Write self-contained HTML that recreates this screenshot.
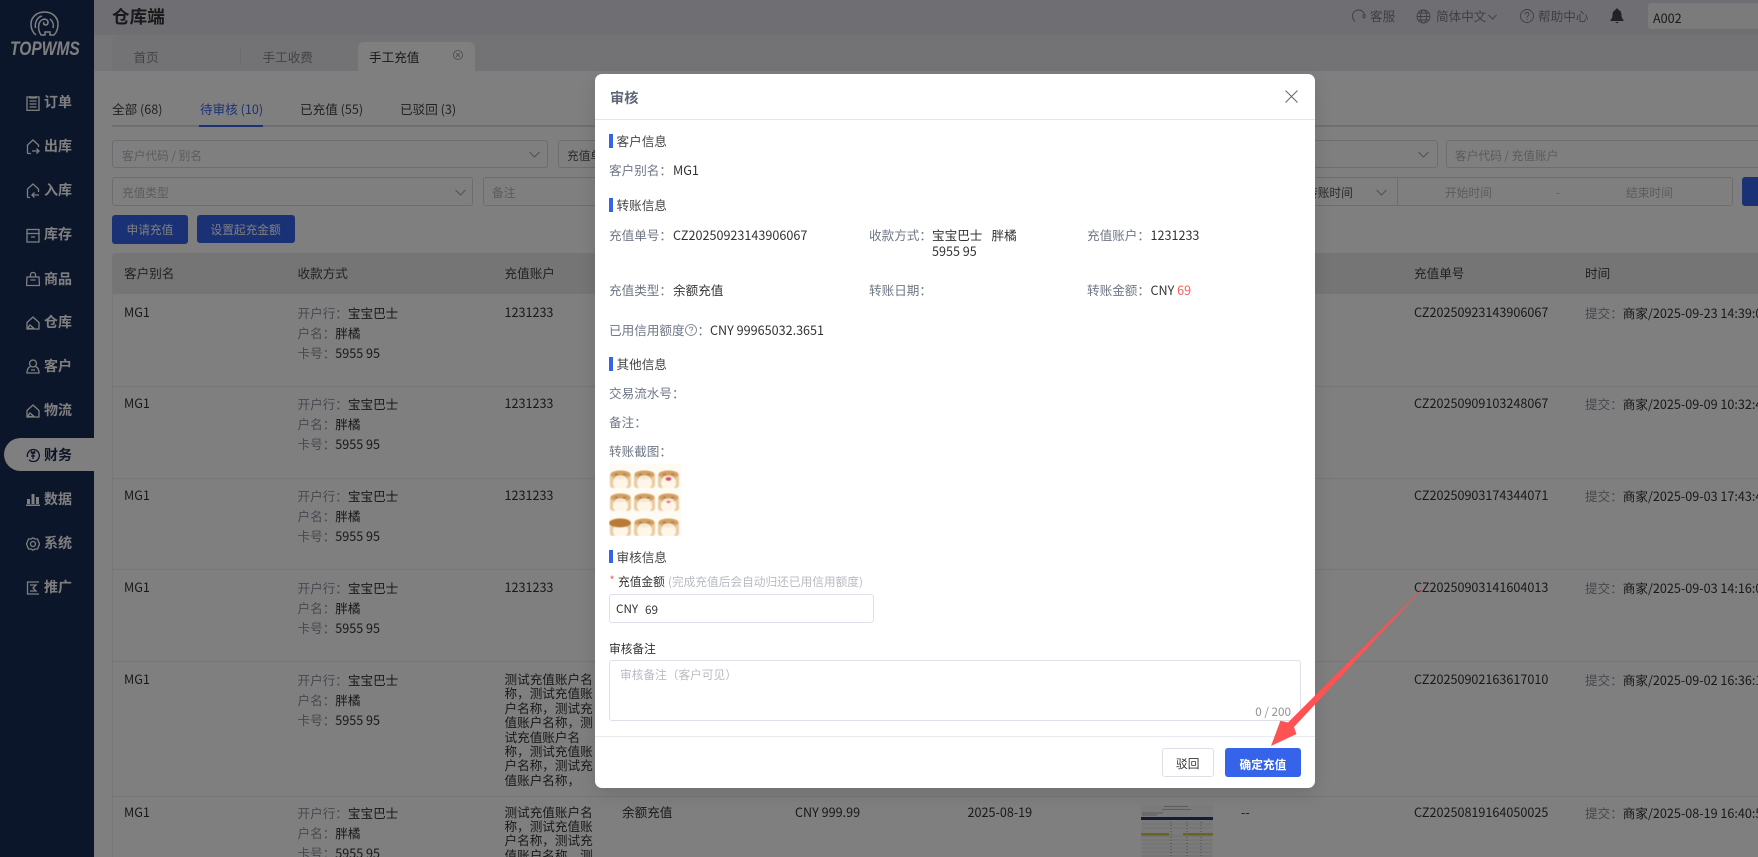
<!DOCTYPE html>
<html lang="zh-CN"><head><meta charset="utf-8"><title>TOPWMS</title>
<style>
html,body{margin:0;padding:0;width:1758px;height:857px;overflow:hidden;background:#fff}
body{position:relative;font-family:"Noto Sans CJK SC","Liberation Sans",sans-serif;font-size:12.6px;color:#333}
.t{position:absolute;white-space:nowrap;line-height:20px;margin-top:-10px}
.b{position:absolute;box-sizing:border-box}
.l{color:#8d929c}
.ph{color:#b4b7be;font-size:11.7px}
.f{position:absolute;box-sizing:border-box;border:1px solid #d8dbe2;border-radius:3px;background:#fff}
.ic{position:absolute;left:26px;fill:none;stroke:#fff;stroke-width:1.3}
.menu{position:absolute;left:44px;font-size:14px;font-weight:700;color:#fff;white-space:nowrap;line-height:20px;margin-top:-11px}
.r{position:absolute;left:112px;right:0;height:1px;background:#ebedf2}
.s{position:absolute;left:609px;width:4px;background:#3563ea}
.ml{color:#6f7786}
.ch{position:absolute;fill:none;stroke:#9ea3ad;stroke-width:1}
</style></head><body>

<!-- sidebar -->
<div class="b" style="left:0;top:0;width:94px;height:857px;background:#182c56"></div>
<svg style="position:absolute;left:30px;top:11px" width="30" height="26" viewBox="0 0 30 26" fill="none" stroke="#fff" stroke-width="1.500"><path d="M6 24C2 21 1 17 1 13 1 6 7 1 14.500 1S28 6 28 13C28 17 27 21 24 24H20V21H15V24H11C9 21 8 17 9 13 10 9 14 7 17 9 19 11 18 14 15.500 14 13.500 14 13 12 14.500 11.500"/><path d="M20 8C23 10.500 24 14 23 17"/><path d="M5.500 17C4.500 11 7.500 6 12 5"/></svg>
<div class="t" style="left:10px;top:50px;width:70px;font:italic 700 19px/20px 'Liberation Sans',sans-serif;color:#fff;transform:scaleX(.82);transform-origin:0 50%;margin-top:-10px">TOPWMS</div>

<div class="b" style="left:4px;top:438px;width:90px;height:33px;background:#fff;border-radius:17px 0 0 17px"></div>

<svg class="ic" style="top:95px" width="14" height="16" viewBox="0 0 14 16"><rect x="1" y="2" width="12" height="13.300"/><path d="M4 1V3H10V1M3.500 6H10.500M3.500 9H10.500M3.500 12H10.500"/></svg>
<svg class="ic" style="top:139px" width="14" height="16" viewBox="0 0 14 16"><path d="M1.500 14.500V6L7 1 12.500 6V8M1.500 14.500H5M6 12H13M10.500 9.500 13 12 10.500 14.500"/></svg>
<svg class="ic" style="top:183px" width="14" height="16" viewBox="0 0 14 16"><path d="M1.500 14.500V6L7 1 12.500 6V9M1.500 14.500H4M13 12H6M8.500 9.500 6 12 8.500 14.500"/></svg>
<svg class="ic" style="top:228px" width="14" height="15" viewBox="0 0 14 15"><rect x="1" y="1.500" width="12" height="4"/><path d="M1 5.500V14H13V5.500M5 9H9"/></svg>
<svg class="ic" style="top:271px" width="14" height="16" viewBox="0 0 14 16"><path d="M1 6H13L13.500 14.500H.5ZM4.500 6V3.500C4.500 .8 9.500 .8 9.500 3.500V6M4.500 9H9.500"/></svg>
<svg class="ic" style="top:316px" width="14" height="14" viewBox="0 0 14 14"><path d="M1 6.500 7 1 13 6.500V13H1ZM1.500 12.500H8L4 9Z"/></svg>
<svg class="ic" style="top:359px" width="14" height="15" viewBox="0 0 14 15"><circle cx="7" cy="4.500" r="3.500"/><path d="M4.500 7.500C2 8.500 1 10.500 1 14H13C13 10.500 12 8.500 9.500 7.500M5 11H9"/></svg>
<svg class="ic" style="top:404px" width="14" height="14" viewBox="0 0 14 14"><path d="M1 6.500 7 1 13 6.500V13H1ZM1.500 12.500H8L4 9Z"/></svg>
<svg class="ic" style="top:448px;stroke:#18294f" width="14" height="14" viewBox="0 0 14 14"><path d="M1.500 9A6 6 0 1 1 3 11.700M4.500 5H9.500M7 5V11M5 8H9M5 3 7 5 9 3"/></svg>
<svg class="ic" style="top:492px;stroke:none;fill:#fff" width="14" height="14" viewBox="0 0 14 14"><rect x="0" y="12.500" width="14" height="1.500"/><rect x="1" y="7" width="3" height="5"/><rect x="5.500" y="2" width="3" height="10"/><rect x="10" y="5" width="3" height="7"/></svg>
<svg class="ic" style="top:537px" width="14" height="14" viewBox="0 0 14 14"><path d="M7 .8 9 2 11.500 2 12.500 4.500 13.500 7 12.500 9.500 11.500 12H9L7 13.200 5 12H2.500L1.500 9.500.5 7 1.500 4.500 2.500 2H5Z"/><circle cx="7" cy="7" r="2.500"/></svg>
<svg class="ic" style="top:581px" width="14" height="14" viewBox="0 0 14 14"><path d="M13 1H1.500V13H13M4 4H10L7 7 10 10H4"/></svg>

<div class="menu" style="top:103px">订单</div>
<div class="menu" style="top:147px">出库</div>
<div class="menu" style="top:191px">入库</div>
<div class="menu" style="top:235px">库存</div>
<div class="menu" style="top:280px">商品</div>
<div class="menu" style="top:323px">仓库</div>
<div class="menu" style="top:367px">客户</div>
<div class="menu" style="top:411px">物流</div>
<div class="menu" style="top:456px;color:#18294f">财务</div>
<div class="menu" style="top:500px">数据</div>
<div class="menu" style="top:544px">系统</div>
<div class="menu" style="top:588px">推广</div>

<!-- header -->
<div class="b" style="left:94px;top:0;width:1664px;height:35px;background:#dfdfe6"></div>
<div class="t" style="left:112px;top:17px;font-size:17.6px;font-weight:700;color:#333">仓库端</div>
<div class="b" style="left:94px;top:35px;width:1664px;height:36px;background:#ededf0"></div>
<div class="b" style="left:112px;top:35px;width:1646px;height:36px;background:#e6e6ea;border-radius:7px 0 0 0"></div>
<div class="t" style="left:133.500px;top:56.500px;color:#888">首页</div>
<div class="b" style="left:240px;top:47px;width:1px;height:18px;background:#d8d8de"></div>
<div class="t" style="left:262.500px;top:56.500px;color:#888">手工收费</div>
<div class="b" style="left:357.500px;top:42px;width:117.500px;height:29px;background:#fff;border-radius:6px 6px 0 0"></div>
<div class="t" style="left:369px;top:56.500px;color:#333">手工充值</div>
<svg style="position:absolute;left:453px;top:50px" width="10" height="10" viewBox="0 0 10 10" fill="none" stroke="#8d929c" stroke-width=".8"><circle cx="5" cy="5" r="4.500"/><path d="M3.200 3.200 6.800 6.800M6.800 3.200 3.200 6.800"/></svg>

<svg style="position:absolute;left:1351px;top:9px" width="15" height="14" viewBox="0 0 15 14" fill="none" stroke="#7a7f8a" stroke-width="1"><path d="M4 12.500C.5 9 1 4 4 2 7 0 11 1 13 4"/><rect x="12" y="5" width="2" height="4" rx="1"/></svg>
<div class="t" style="left:1370px;top:16px;color:#7a7f8a">客服</div>
<svg style="position:absolute;left:1416px;top:9px" width="15" height="15" viewBox="0 0 15 15" fill="none" stroke="#7a7f8a" stroke-width=".9"><circle cx="7.500" cy="7.500" r="6.500"/><ellipse cx="7.500" cy="7.500" rx="3" ry="6.500"/><path d="M1 7.500H14M2 4H13M2 11H13"/></svg>
<div class="t" style="left:1436px;top:16px;color:#7a7f8a">简体中文</div>
<svg style="position:absolute;left:1488px;top:14px" width="9" height="6" viewBox="0 0 9 6" fill="none" stroke="#7a7f8a"><path d="M.5 1 4.500 5 8.500 1"/></svg>
<svg style="position:absolute;left:1520px;top:9px" width="14" height="14" viewBox="0 0 14 14" fill="none" stroke="#7a7f8a" stroke-width=".9"><circle cx="7" cy="7" r="6.500"/><path d="M5 5.500C5 2.800 9 2.800 9 5.300 9 6.800 7 6.800 7 8.500M7 9.800V11"/></svg>
<div class="t" style="left:1538px;top:16px;color:#7a7f8a">帮助中心</div>
<svg style="position:absolute;left:1610px;top:8px" width="14" height="16" viewBox="0 0 14 16" fill="#40444f"><path d="M7 .5C8 .5 8.500 1 8.500 2 11 2.800 11.500 5 11.500 7.500 11.500 9.500 12.500 11 13.500 12V13H.5V12C1.500 11 2.500 9.500 2.500 7.500 2.500 5 3 2.800 5.500 2 5.500 1 6 .5 7 .5ZM5.500 14H8.500C8.500 15.500 5.500 15.500 5.500 14Z"/></svg>
<div class="b" style="left:1648px;top:3px;width:110px;height:26px;background:#f6f6f8;border-radius:3px 0 0 3px"></div>
<div class="t" style="left:1653px;top:17.500px;color:#333">A002</div>

<!-- sub tabs -->
<div class="t" style="left:112px;top:108.500px;color:#444">全部 (68)</div>
<div class="t" style="left:200px;top:108.500px;color:#3563ea">待审核 (10)</div>
<div class="t" style="left:300px;top:108.500px;color:#444">已充值 (55)</div>
<div class="t" style="left:400px;top:108.500px;color:#444">已驳回 (3)</div>
<div class="b" style="left:112px;top:125px;width:1646px;height:2px;background:#dcdde6"></div>
<div class="b" style="left:199px;top:125px;width:64px;height:2px;background:#3563ea"></div>

<!-- filters -->
<div class="f" style="left:112px;top:140px;width:436px;height:28px"></div>
<div class="t ph" style="left:122px;top:155.500px">客户代码 / 别名</div>
<svg class="ch" style="left:529px;top:151px" width="11" height="7"><path d="M.5 1 5.500 6 10.500 1"/></svg>
<div class="f" style="left:557.500px;top:140px;width:880px;height:28px"></div>
<div class="t" style="left:567px;top:155.500px;font-size:11.700px;color:#555">充值单号</div>
<svg class="ch" style="left:1418px;top:151px" width="11" height="7"><path d="M.5 1 5.500 6 10.500 1"/></svg>
<div class="f" style="left:1446px;top:140px;width:320px;height:28px"></div>
<div class="t ph" style="left:1455px;top:155.500px">客户代码 / 充值账户</div>

<div class="f" style="left:112px;top:177px;width:361px;height:29px"></div>
<div class="t ph" style="left:122px;top:192.500px">充值类型</div>
<svg class="ch" style="left:455px;top:189px" width="11" height="7"><path d="M.5 1 5.500 6 10.500 1"/></svg>
<div class="f" style="left:482.500px;top:177px;width:1250px;height:29px"></div>
<div class="t ph" style="left:492px;top:192.500px">备注</div>
<div class="t" style="left:1306px;top:192.500px;font-size:11.700px;color:#555">转账时间</div>
<svg class="ch" style="left:1376px;top:189px" width="11" height="7"><path d="M.5 1 5.500 6 10.500 1"/></svg>
<div class="b" style="left:1397px;top:177px;width:1px;height:29px;background:#d8dbe2"></div>
<div class="t ph" style="left:1445px;top:192.500px">开始时间</div>
<div class="t ph" style="left:1556px;top:192.500px">-</div>
<div class="t ph" style="left:1626px;top:192.500px">结束时间</div>
<div class="b" style="left:1742px;top:177px;width:20px;height:29px;background:#3563ea;border-radius:3px"></div>

<div class="b" style="left:112px;top:215px;width:75.500px;height:29px;background:#3563ea;border-radius:3px"></div>
<div class="t" style="left:126.500px;top:229.500px;font-size:11.700px;color:#fff">申请充值</div>
<div class="b" style="left:196.500px;top:215px;width:98.500px;height:28px;background:#3563ea;border-radius:3px"></div>
<div class="t" style="left:210.500px;top:229.500px;font-size:11.700px;color:#fff">设置起充金额</div>

<!-- table -->
<div class="b" style="left:112px;top:253px;width:1646px;height:41px;background:#ebebeb;border-radius:3px 0 0 0"></div>
<div class="b" style="left:112px;top:294px;width:1px;height:563px;background:#f0f0f3"></div>
<div class="t" style="left:124px;top:273px;color:#444">客户别名</div>
<div class="t" style="left:297.500px;top:273px;color:#444">收款方式</div>
<div class="t" style="left:504.500px;top:273px;color:#444">充值账户</div>
<div class="t" style="left:1414px;top:273px;color:#444">充值单号</div>
<div class="t" style="left:1585px;top:273px;color:#444">时间</div>

<div class="r" style="top:386px"></div><div class="r" style="top:477.500px"></div><div class="r" style="top:569px"></div><div class="r" style="top:661px"></div><div class="r" style="top:795.500px"></div>

<!-- row 1 -->
<div class="t" style="left:124px;top:312px">MG1</div>
<div class="t" style="left:297.500px;top:313px"><span class="l">开户行：</span>宝宝巴士</div>
<div class="t" style="left:297.500px;top:333px"><span class="l">户名：</span>胖橘</div>
<div class="t" style="left:297.500px;top:353px"><span class="l">卡号：</span>5955 95</div>
<div class="t" style="left:504.500px;top:312px">1231233</div>
<div class="t" style="left:1414px;top:312px">CZ20250923143906067</div>
<div class="t" style="left:1585px;top:313px"><span class="l">提交：</span>商家/2025-09-23 14:39:06</div>
<!-- row 2 -->
<div class="t" style="left:124px;top:403px">MG1</div>
<div class="t" style="left:297.500px;top:404px"><span class="l">开户行：</span>宝宝巴士</div>
<div class="t" style="left:297.500px;top:424px"><span class="l">户名：</span>胖橘</div>
<div class="t" style="left:297.500px;top:444px"><span class="l">卡号：</span>5955 95</div>
<div class="t" style="left:504.500px;top:403px">1231233</div>
<div class="t" style="left:1414px;top:403px">CZ20250909103248067</div>
<div class="t" style="left:1585px;top:404px"><span class="l">提交：</span>商家/2025-09-09 10:32:48</div>
<!-- row 3 -->
<div class="t" style="left:124px;top:495px">MG1</div>
<div class="t" style="left:297.500px;top:496px"><span class="l">开户行：</span>宝宝巴士</div>
<div class="t" style="left:297.500px;top:516px"><span class="l">户名：</span>胖橘</div>
<div class="t" style="left:297.500px;top:536px"><span class="l">卡号：</span>5955 95</div>
<div class="t" style="left:504.500px;top:495px">1231233</div>
<div class="t" style="left:1414px;top:495px">CZ20250903174344071</div>
<div class="t" style="left:1585px;top:496px"><span class="l">提交：</span>商家/2025-09-03 17:43:44</div>
<!-- row 4 -->
<div class="t" style="left:124px;top:587px">MG1</div>
<div class="t" style="left:297.500px;top:588px"><span class="l">开户行：</span>宝宝巴士</div>
<div class="t" style="left:297.500px;top:608px"><span class="l">户名：</span>胖橘</div>
<div class="t" style="left:297.500px;top:628px"><span class="l">卡号：</span>5955 95</div>
<div class="t" style="left:504.500px;top:587px">1231233</div>
<div class="t" style="left:1414px;top:587px">CZ20250903141604013</div>
<div class="t" style="left:1585px;top:588px"><span class="l">提交：</span>商家/2025-09-03 14:16:04</div>
<!-- row 5 -->
<div class="t" style="left:124px;top:679px">MG1</div>
<div class="t" style="left:297.500px;top:680px"><span class="l">开户行：</span>宝宝巴士</div>
<div class="t" style="left:297.500px;top:700px"><span class="l">户名：</span>胖橘</div>
<div class="t" style="left:297.500px;top:720px"><span class="l">卡号：</span>5955 95</div>
<div class="b" style="left:504.500px;top:672px;line-height:14.400px;white-space:nowrap">测试充值账户名<br>称，测试充值账<br>户名称，测试充<br>值账户名称，测<br>试充值账户名<br>称，测试充值账<br>户名称，测试充<br>值账户名称，</div>
<div class="t" style="left:1414px;top:679px">CZ20250902163617010</div>
<div class="t" style="left:1585px;top:680px"><span class="l">提交：</span>商家/2025-09-02 16:36:10</div>
<!-- row 6 -->
<div class="t" style="left:124px;top:811.500px">MG1</div>
<div class="t" style="left:297.500px;top:812.500px"><span class="l">开户行：</span>宝宝巴士</div>
<div class="t" style="left:297.500px;top:832.500px"><span class="l">户名：</span>胖橘</div>
<div class="t" style="left:297.500px;top:852.500px"><span class="l">卡号：</span>5955 95</div>
<div class="b" style="left:504.500px;top:804.500px;line-height:14.400px;white-space:nowrap">测试充值账户名<br>称，测试充值账<br>户名称，测试充<br>值账户名称，测</div>
<div class="t" style="left:622px;top:812px">余额充值</div>
<div class="t" style="left:795px;top:812px">CNY 999.99</div>
<div class="t" style="left:967.500px;top:812px">2025-08-19</div>
<svg style="position:absolute;left:1141px;top:805px" width="72" height="52" viewBox="0 0 72 52"><rect width="72" height="52" fill="#f6f6f6"/><path d="M23 1.500H47M21 4.500H50M1 8H22M1 10H16" stroke="#aaa" stroke-width=".8"/><rect y="12" width="72" height="3" fill="#27366f"/><path d="M1 19H71M1 23H71M1 31H71M1 35H71M1 39H71M1 43H71M1 47H71M1 51H71" stroke="#dcdcdc" stroke-width=".7"/><path d="M30 17V52M46 17V52M60 17V52" stroke="#c4c4c4" stroke-width="2" stroke-dasharray="1 2"/><rect y="28" width="28" height="2.500" fill="#d6ca4a"/><rect x="42" y="28" width="30" height="2.500" fill="#d6ca4a"/></svg>
<div class="t" style="left:1241px;top:812px">--</div>
<div class="t" style="left:1414px;top:812px">CZ20250819164050025</div>
<div class="t" style="left:1585px;top:813px"><span class="l">提交：</span>商家/2025-08-19 16:40:50</div>

<!-- overlay -->
<div class="b" style="left:0;top:0;width:1758px;height:857px;background:rgba(0,0,0,.5)"></div>

<!-- modal -->
<div class="b" style="left:595px;top:74px;width:720px;height:714px;background:#fff;border-radius:7px;box-shadow:0 6px 18px rgba(0,0,0,.12)"></div>
<div class="t" style="left:610px;top:97.500px;font-size:14.200px;font-weight:700;color:#5f6876">审核</div>
<svg style="position:absolute;left:1285px;top:90px" width="13" height="13" viewBox="0 0 13 13" fill="none" stroke="#5f6876" stroke-width="1"><path d="M.5.5 12.500 12.500M12.500.5.5 12.500"/></svg>
<div class="b" style="left:595px;top:119px;width:720px;height:1px;background:#e4e6eb"></div>

<div class="s" style="top:134px;height:14px"></div>
<div class="t" style="left:616.500px;top:141px;color:#444">客户信息</div>
<div class="t ml" style="left:609px;top:170px">客户别名：</div>
<div class="t" style="left:673px;top:170px">MG1</div>

<div class="s" style="top:198px;height:14px"></div>
<div class="t" style="left:616.500px;top:205px;color:#444">转账信息</div>
<div class="t ml" style="left:609px;top:234.500px">充值单号：</div>
<div class="t" style="left:673px;top:234.500px">CZ20250923143906067</div>
<div class="t ml" style="left:869px;top:234.500px">收款方式：</div>
<div class="t" style="left:932px;top:234.500px">宝宝巴士</div>
<div class="t" style="left:991.500px;top:234.500px">胖橘</div>
<div class="t" style="left:932px;top:250.500px">5955 95</div>
<div class="t ml" style="left:1087px;top:234.500px">充值账户：</div>
<div class="t" style="left:1150.500px;top:234.500px">1231233</div>
<div class="t ml" style="left:609px;top:290px">充值类型：</div>
<div class="t" style="left:673px;top:290px">余额充值</div>
<div class="t ml" style="left:869px;top:290px">转账日期：</div>
<div class="t ml" style="left:1087px;top:290px">转账金额：</div>
<div class="t" style="left:1150.500px;top:290px">CNY <span style="color:#f56060">69</span></div>
<div class="t ml" style="left:609px;top:330px">已用信用额度</div>
<svg style="position:absolute;left:685px;top:324px" width="12" height="12" viewBox="0 0 12 12" fill="none" stroke="#6f7786" stroke-width=".8"><circle cx="6" cy="6" r="5.500"/><path d="M4.300 4.700C4.300 2.500 7.700 2.500 7.700 4.500 7.700 5.800 6 5.800 6 7.300M6 8.300V9.300"/></svg>
<div class="t ml" style="left:697.500px;top:330px">：</div>
<div class="t" style="left:710px;top:330px">CNY 99965032.3651</div>

<div class="s" style="top:357px;height:14px"></div>
<div class="t" style="left:616.500px;top:364px;color:#444">其他信息</div>
<div class="t ml" style="left:609px;top:393px">交易流水号：</div>
<div class="t ml" style="left:609px;top:422px">备注：</div>
<div class="t ml" style="left:609px;top:451px">转账截图：</div>

<svg style="position:absolute;left:609px;top:464px" width="72" height="72" viewBox="0 0 72 72">
<defs><filter id="bl" x="-10%" y="-10%" width="120%" height="120%"><feGaussianBlur stdDeviation=".6"/></filter>
<g id="cat"><rect x="1" y="3" width="21" height="15" rx="3" fill="#e8cba2"/><ellipse cx="11.500" cy="13" rx="7.500" ry="7" fill="#fff6e8"/><path d="M1 18H22V20H1Z" fill="#fdfbf3"/><ellipse cx="11.500" cy="4.500" rx="10" ry="4" fill="#d49f60"/><ellipse cx="11.500" cy="7.500" rx="5.500" ry="2" fill="#f6e8d2"/><path d="M6 4.500H9M14 4.500H17" stroke="#6e6040" stroke-width="1"/></g></defs>
<rect width="72" height="72" fill="#fdfbf3"/>
<g filter="url(#bl)">
<use href="#cat" x="0" y="6"/><use href="#cat" x="24" y="6"/><use href="#cat" x="48" y="6"/>
<use href="#cat" x="0" y="29"/><use href="#cat" x="24" y="29"/><use href="#cat" x="48" y="29"/>
<use href="#cat" x="0" y="54"/><use href="#cat" x="24" y="54"/><use href="#cat" x="48" y="54"/>
<ellipse cx="59.500" cy="15" rx="3" ry="2" fill="#d9506a"/><ellipse cx="59.500" cy="38" rx="2" ry="1.200" fill="#d9708a"/>
<ellipse cx="11" cy="59" rx="11" ry="4.500" fill="#b97a35"/>
</g></svg>

<div class="s" style="top:550px;height:13px"></div>
<div class="t" style="left:616.500px;top:557px;color:#444">审核信息</div>
<div class="t" style="left:609.500px;top:580px;font-size:11px;color:#f56060">*</div>
<div class="t" style="left:618px;top:582px;font-size:11.700px">充值金额</div>
<div class="t" style="left:668px;top:582px;font-size:11.700px;color:#b8bbc3">(完成充值后会自动归还已用信用额度)</div>
<div class="b" style="left:609px;top:594px;width:265px;height:29px;border:1px solid #dde0e8;border-radius:3px"></div>
<div class="t" style="left:616px;top:609px;font-size:11.700px">CNY</div>
<div class="t" style="left:645px;top:609.500px;font-size:11.700px">69</div>
<div class="t" style="left:609px;top:648.500px;font-size:11.700px">审核备注</div>
<div class="b" style="left:609px;top:660px;width:692px;height:61px;border:1px solid #dde0e8;border-radius:3px"></div>
<div class="t" style="left:620px;top:675px;font-size:11.700px;color:#b8bbc3">审核备注（客户可见）</div>
<div class="t" style="right:467px;top:712px;font-size:11.700px;color:#8d929c">0 / 200</div>
<div class="b" style="left:595px;top:736px;width:720px;height:1px;background:#e8eaef"></div>
<div class="b" style="left:1162px;top:748px;width:52px;height:29px;border:1px solid #dcdfe6;border-radius:3px;background:#fff"></div>
<div class="t" style="left:1176px;top:764px;font-size:11.700px">驳回</div>
<div class="b" style="left:1225px;top:748px;width:76px;height:29px;background:#3563ea;border-radius:3px"></div>
<div class="t" style="left:1239.500px;top:764.500px;font-size:11.700px;font-weight:700;color:#fff">确定充值</div>

<!-- arrow -->
<svg style="position:absolute;left:0;top:0" width="1758" height="857"><polygon points="1271,746 1280.400,720.700 1288,722.500 1428,583 1294,727 1296.400,734" fill="#ff5252"/></svg>
</body></html>
